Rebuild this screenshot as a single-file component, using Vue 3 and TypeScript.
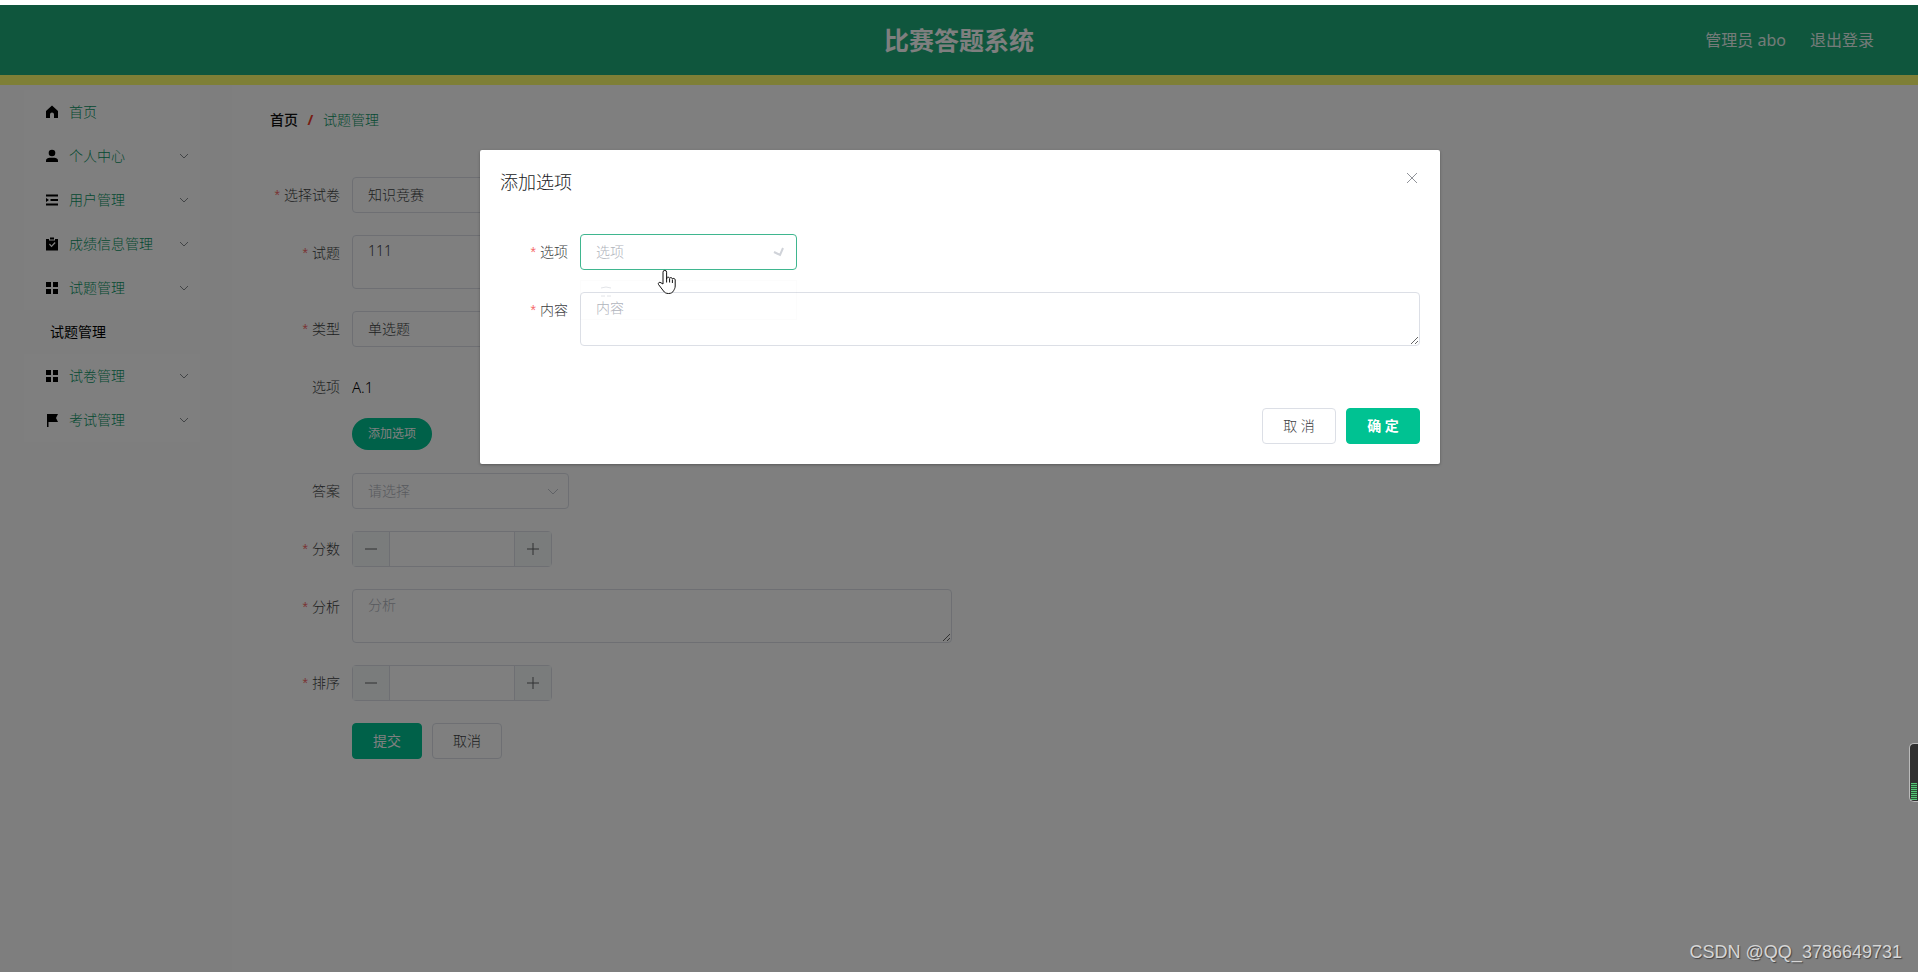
<script setup lang="ts">
import { ref } from 'vue'

interface MenuItem {
  label: string
  icon: 'home' | 'user' | 'list' | 'clip' | 'grid' | 'flag'
  children?: string[]
  expandable: boolean
}

const menu: MenuItem[] = [
  { label: '首页', icon: 'home', expandable: false },
  { label: '个人中心', icon: 'user', expandable: true },
  { label: '用户管理', icon: 'list', expandable: true },
  { label: '成绩信息管理', icon: 'clip', expandable: true },
  { label: '试题管理', icon: 'grid', expandable: true, children: ['试题管理'] },
  { label: '试卷管理', icon: 'grid', expandable: true },
  { label: '考试管理', icon: 'flag', expandable: true },
]

const paper = ref('知识竞赛')
const question = ref('111')
const kind = ref('单选题')
const answer = ref('')
const score = ref('')
const analysis = ref('')
const order = ref('')
const optionKey = ref('')
const optionText = ref('')

function step(value: string, by: number): string {
  return String(Number(value || 0) + by)
}
</script>

<template>
  <div class="page">
    <div class="app">
      <header class="top">
        <h1>比赛答题系统</h1>
        <nav class="account">
          <span>管理员 abo</span>
          <a href="#">退出登录</a>
        </nav>
      </header>

      <div class="columns">
        <aside class="side">
          <ul class="menu">
            <li v-for="item in menu" :key="item.label">
              <a href="#" class="entry">
                <svg class="icon" viewBox="0 0 16 16" aria-hidden="true">
                  <path v-if="item.icon === 'home'" d="M8 1.500 2 7V14h4V10.500a2 2 0 0 1 4 0v3.500H14V7Z" />
                  <g v-else-if="item.icon === 'user'">
                    <circle cx="8" cy="5" r="3.300" />
                    <path d="M2 14v-1.500C2 10.500 4 9.700 5.500 9.700h5c1.500 0 3.500.8 3.500 2.800V14Z" />
                  </g>
                  <path v-else-if="item.icon === 'list'" d="M2 2.500h12v2H2zM6.500 7H14v2H6.500zM2 11.500h12v2H2zM2 6l3 2-3 2z" />
                  <path v-else-if="item.icon === 'clip'" fill-rule="evenodd" d="M2 3h3v1.500h6V3h3v11.500H2ZM6 1.500h4V3.500H6ZM5 8.500l2.500 2.700L11.600 7l-.9-.9-3.200 3.300L5.900 7.600Z" />
                  <path v-else-if="item.icon === 'grid'" d="M2 2h5v5H2zM9 2h5v5H9zM2 9h5v5H2zM9 9h5v5H9z" />
                  <path v-else d="M3 2h11l-2 4 2 4H4.500v5H3Z" />
                </svg>
                <span>{{ item.label }}</span>
                <svg v-if="item.expandable" class="caret" viewBox="0 0 12 12" aria-hidden="true">
                  <path d="M2 4l4 4 4-4" />
                </svg>
              </a>
              <a v-for="child in item.children" :key="child" href="#" class="child">{{ child }}</a>
            </li>
          </ul>
        </aside>

        <main class="main">
          <nav class="crumbs">
            <a href="#">首页</a><span class="slash">/</span><span class="here">试题管理</span>
          </nav>

          <form class="form" @submit.prevent>
            <div class="row">
              <label for="paper" class="must">选择试卷</label>
              <div class="select">
                <select id="paper" v-model="paper"><option>知识竞赛</option></select>
                <svg viewBox="0 0 12 12" aria-hidden="true"><path d="M2 4l4 5 4-5" /></svg>
              </div>
            </div>
            <div class="row">
              <label for="question" class="must">试题</label>
              <textarea id="question" v-model="question" class="wide"></textarea>
            </div>
            <div class="row">
              <label for="kind" class="must">类型</label>
              <div class="select">
                <select id="kind" v-model="kind"><option>单选题</option></select>
                <svg viewBox="0 0 12 12" aria-hidden="true"><path d="M2 4l4 5 4-5" /></svg>
              </div>
            </div>
            <div class="row">
              <span class="label">选项</span>
              <div class="options">
                <span>A.1</span>
                <button type="button" class="pill">添加选项</button>
              </div>
            </div>
            <div class="row">
              <label for="answer">答案</label>
              <div class="select">
                <select id="answer" v-model="answer" class="blank">
                  <option value="">请选择</option>
                  <option>A</option>
                </select>
                <svg viewBox="0 0 12 12" aria-hidden="true"><path d="M1 4l5 5 5-5" /></svg>
              </div>
            </div>
            <div class="row">
              <label for="score" class="must">分数</label>
              <div class="number">
                <button type="button" aria-label="减少分数" @click="score = step(score, -1)">
                  <svg viewBox="0 0 12 12"><path d="M0 6h12" /></svg>
                </button>
                <input id="score" v-model="score" type="text" />
                <button type="button" aria-label="增加分数" @click="score = step(score, 1)">
                  <svg viewBox="0 0 12 12"><path d="M0 6h12M6 0v12" /></svg>
                </button>
              </div>
            </div>
            <div class="row">
              <label for="analysis" class="must">分析</label>
              <textarea id="analysis" v-model="analysis" class="wide" placeholder="分析"></textarea>
            </div>
            <div class="row">
              <label for="order" class="must">排序</label>
              <div class="number">
                <button type="button" aria-label="减少排序" @click="order = step(order, -1)">
                  <svg viewBox="0 0 12 12"><path d="M0 6h12" /></svg>
                </button>
                <input id="order" v-model="order" type="text" />
                <button type="button" aria-label="增加排序" @click="order = step(order, 1)">
                  <svg viewBox="0 0 12 12"><path d="M0 6h12M6 0v12" /></svg>
                </button>
              </div>
            </div>
            <div class="row actions">
              <button type="submit" class="btn primary">提交</button>
              <button type="button" class="btn">取消</button>
            </div>
          </form>
        </main>
      </div>

      <div class="mask">
        <section class="dialog" role="dialog" aria-labelledby="dialog-title">
          <header class="dialog-head">
            <h2 id="dialog-title">添加选项</h2>
            <button type="button" class="close" aria-label="关闭">
              <svg viewBox="0 0 12 12"><path d="M1 1l10 10M11 1 1 11" /></svg>
            </button>
          </header>
          <div class="dialog-body">
            <div class="row">
              <label for="option-key" class="must">选项</label>
              <div class="select active">
                <select id="option-key" v-model="optionKey" class="blank">
                  <option value="">选项</option>
                  <option>B</option>
                </select>
                <svg class="turning" viewBox="0 0 12 12" aria-hidden="true"><path d="M1 6l6 3 3-7" /></svg>
                <div class="popper">
                  <svg viewBox="0 0 14 12" aria-hidden="true"><path d="M2 2q5-2 10 0M2 10h4M8 10h4" /></svg>
                </div>
                <svg class="hand" viewBox="0 0 20 26" aria-hidden="true">
                  <path d="M6 15V3.200a1.800 1.800 0 0 1 3.600 0V10l.2-1.200c.6-1 2.400-.8 2.800.4.600-1 2.400-.8 2.800.6.800-.8 2.600-.4 2.800 1V17c0 2-1 3.500-1.500 4.500C15.800 23.500 14 24.500 11.500 24.500S7.500 23.500 6.500 22L1.500 15.500C.7 14 2.500 12.500 4 13.800Z" />
                  <path d="M9.600 9v4.500M12.600 9.500v4M15.400 10.500v3.500" />
                </svg>
              </div>
            </div>
            <div class="row">
              <label for="option-text" class="must">内容</label>
              <textarea id="option-text" v-model="optionText" placeholder="内容"></textarea>
            </div>
          </div>
          <footer class="dialog-foot">
            <button type="button" class="btn">取 消</button>
            <button type="button" class="btn primary strong">确 定</button>
          </footer>
        </section>
      </div>

      <div class="gauge"><i></i></div>
      <div class="watermark">CSDN @QQ_3786649731</div>
    </div>
  </div>
</template>

<style>
body {
  margin: 0;
}
</style>

<style scoped>
.page {
  box-sizing: border-box;
  min-height: 100vh;
  padding-top: 5px;
  background: #fff;
  color: #3c3e42;
  font: 300 14px/20px "Noto Sans", "Noto Sans CJK SC", sans-serif;
}
.page *,
.page *::before {
  box-sizing: border-box;
}
.app {
  position: relative;
  display: flex;
  flex-direction: column;
  min-height: calc(100vh - 5px);
  overflow: hidden;
}
a {
  color: inherit;
  text-decoration: none;
}
button,
input,
select,
textarea {
  font: inherit;
  color: inherit;
}
button {
  padding: 0;
  cursor: pointer;
}
.top {
  display: grid;
  grid-template-columns: 1fr auto 1fr;
  align-items: center;
  height: 80px;
  border-bottom: 10px solid #fdff6c;
  background: #1eac7a;
  color: #fff;
}
.top h1 {
  grid-column: 2;
  margin: 0;
  font-size: 25px;
  line-height: 36px;
  font-weight: 700;
}
.account {
  display: flex;
  justify-content: flex-end;
  gap: 24px;
  padding-right: 44px;
  font-size: 16px;
  font-weight: 400;
  opacity: 0.9;
}
.columns {
  display: flex;
  flex: 1;
}
.side {
  flex: none;
  width: 232px;
  padding: 5px 32px 0 24px;
  background: #fdfdfd;
}
.menu {
  margin: 0;
  padding: 0;
  list-style: none;
  background: #fff;
}
.entry,
.child {
  display: flex;
  align-items: center;
  height: 44px;
}
.entry {
  gap: 9px;
  padding: 0 10px 0 20px;
  color: #089464;
}
.child {
  padding-left: 26px;
  background: #fdfdfd;
  color: #000;
  font-weight: 400;
}
.icon {
  width: 16px;
  height: 16px;
  fill: #000;
}
.caret {
  width: 12px;
  height: 12px;
  margin-left: auto;
  fill: none;
  stroke: #85888c;
}
.main {
  flex: 1;
  padding: 25px 38px;
}
.crumbs {
  display: flex;
  margin-bottom: 47px;
  color: #089464;
}
.crumbs a {
  color: #111;
  font-weight: 500;
}
.slash {
  width: 25px;
  color: #f03c28;
  font-weight: 700;
  text-align: center;
}
.row {
  display: flex;
  align-items: flex-start;
  margin-bottom: 22px;
}
.row > label,
.label {
  flex: none;
  width: 82px;
  padding-right: 12px;
  line-height: 36px;
  text-align: right;
  white-space: nowrap;
}
.must::before {
  content: "*";
  margin-right: 4px;
  color: #f56c6c;
  font-family: "Liberation Sans", sans-serif;
}
.select {
  position: relative;
  width: 217px;
}
.select select {
  display: block;
  width: 100%;
  height: 36px;
  padding: 0 30px 0 15px;
  border: 1px solid #dcdfe6;
  border-radius: 4px;
  background: transparent;
  appearance: none;
  outline: none;
}
.select .blank {
  color: #b0b4bc;
}
.select > svg {
  position: absolute;
  top: 12px;
  right: 10px;
  width: 12px;
  height: 12px;
  fill: none;
  stroke: #c0c4cc;
  pointer-events: none;
}
.select > .turning {
  right: 12px;
  stroke: #d0d3d9;
  stroke-width: 2px;
}
.select.active select {
  border-color: #3fb68f;
}
textarea {
  display: block;
  flex: 1;
  height: 54px;
  padding: 5px 15px;
  border: 1px solid #dcdfe6;
  border-radius: 4px;
  background: transparent;
  line-height: 20px;
  resize: vertical;
  outline: none;
}
textarea.wide {
  flex: 0 1 600px;
}
textarea::placeholder {
  color: #b0b4bc;
}
.options {
  display: flex;
  flex-direction: column;
  align-items: flex-start;
  gap: 13px;
  margin-bottom: 1px;
  color: #000;
  line-height: 36px;
}
.options span {
  font-size: 15px;
}
.pill {
  width: 80px;
  height: 32px;
  border: 0;
  border-radius: 16px;
  background: #00c292;
  color: #fff;
  font-size: 12px;
  font-weight: 400;
  line-height: 16px;
}
.number {
  display: flex;
  width: 200px;
  height: 36px;
  border: 1px solid #dcdfe6;
  border-radius: 4px;
}
.number button {
  display: grid;
  place-items: center;
  flex: none;
  width: 36px;
  border: 0;
  background: #f5f9f8;
}
.number svg {
  width: 12px;
  height: 12px;
  fill: none;
  stroke: #606266;
}
.number input {
  flex: 1;
  min-width: 0;
  border: solid #dcdfe6;
  border-width: 0 1px;
  background: transparent;
  text-align: center;
  outline: none;
}
.btn {
  width: 70px;
  height: 36px;
  border: 1px solid #dcdfe6;
  border-radius: 4px;
  background: #fff;
}
.primary {
  border-color: #00c292;
  background: #00c292;
  color: #fff;
  font-weight: 400;
}
.actions {
  gap: 10px;
  padding-left: 82px;
}
.mask {
  position: absolute;
  inset: 0 -2px 0 0;
  background: rgba(0, 0, 0, 0.5);
}
.dialog {
  width: 50%;
  margin: 145px auto 0;
  border-radius: 2px;
  background: #fff;
  box-shadow: 0 1px 3px rgba(0, 0, 0, 0.3);
}
.dialog-head {
  display: flex;
  justify-content: space-between;
  padding: 20px 20px 10px;
}
.dialog-head h2 {
  margin: 0;
  color: #202123;
  font-size: 18px;
  line-height: 24px;
  font-weight: 300;
}
.close {
  display: grid;
  place-items: center;
  width: 16px;
  height: 16px;
  border: 0;
  background: none;
}
.close svg {
  width: 12px;
  height: 12px;
  fill: none;
  stroke: #909399;
}
.dialog-body {
  padding: 30px 20px;
}
.dialog-body label {
  width: 80px;
}
.dialog-foot {
  display: flex;
  justify-content: flex-end;
  gap: 10px;
  padding: 10px 20px 20px;
}
.dialog-foot .btn {
  width: 74px;
}
.dialog-foot .strong {
  font-weight: 700;
}
.popper {
  position: absolute;
  top: 46px;
  left: 0;
  width: 217px;
  height: 40px;
  border: 1px solid rgba(0, 0, 0, 0.01);
  pointer-events: none;
}
.popper svg {
  display: block;
  width: 14px;
  height: 12px;
  margin: 5px 18px;
  fill: none;
  stroke: #e2e4e8;
}
.select > .hand {
  top: 35px;
  left: 77px;
  width: 20px;
  height: 26px;
  fill: #fff;
  stroke: #111;
}
.gauge {
  position: absolute;
  top: 738px;
  right: 0;
  display: flex;
  align-items: flex-end;
  width: 9px;
  height: 59px;
  padding: 1px;
  border: 1px solid #bbb;
  border-right: 0;
  border-radius: 5px 0 0 5px;
  background: #303030;
}
.gauge i {
  width: 100%;
  height: 17px;
  background: repeating-linear-gradient(#55c777 0 1px, #2c5438 1px 2px);
}
.watermark {
  position: absolute;
  right: 16px;
  bottom: 8px;
  color: #d6d6d6;
  font: 18px/24px "Liberation Sans", sans-serif;
  text-shadow: 1px 1px 1px #444;
}
</style>
